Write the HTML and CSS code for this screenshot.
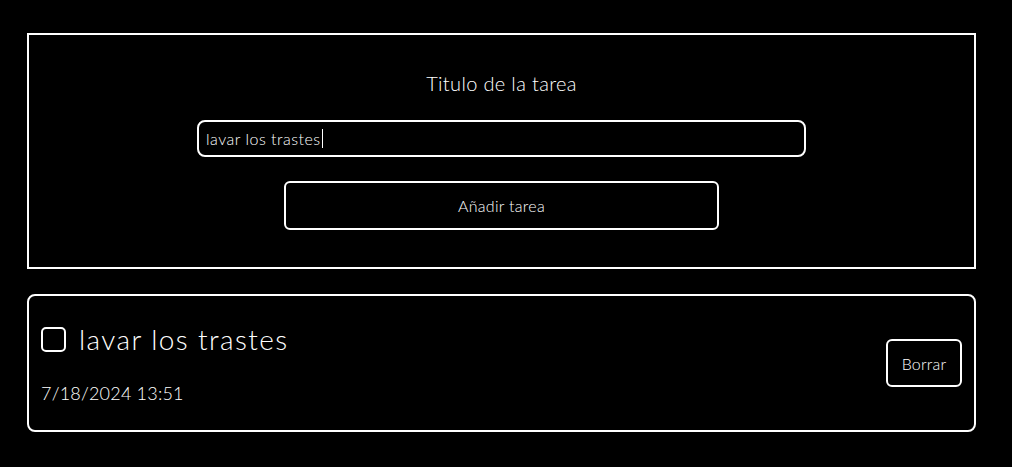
FILE: index.html
```html
<!DOCTYPE html>
<html lang="es">
<head>
<meta charset="utf-8">
<title>Tareas</title>
<link rel="stylesheet" href="styles.css">
</head>
<body>
<main class="page">
  <section class="form-box">
    <label class="form-label" for="title">Titulo de la tarea</label>
    <div class="input-field"><span class="input-text">lavar los trastes</span><span class="caret"></span></div>
    <button class="add-btn" type="button">Añadir tarea</button>
  </section>
  <section class="task">
    <div class="task-info">
      <div class="task-head">
        <span class="check"></span>
        <span class="task-title">lavar los trastes</span>
      </div>
      <div class="task-date">7/18/2024 13:51</div>
    </div>
    <button class="del-btn" type="button">Borrar</button>
  </section>
</main>
</body>
</html>
```
FILE: styles.css
```css
html, body {
  margin: 0;
  background: #000;
  color: #fff;
  font-family: "Lato", "Open Sans", sans-serif;
}
.page {
  padding: 33px 36px 0 27px;
  display: flex;
  flex-direction: column;
  gap: 25px;
}
.form-box {
  border: 2px solid #fff;
  height: 236px;
  box-sizing: border-box;
  display: flex;
  flex-direction: column;
  align-items: center;
  padding-top: 36px;
}
.form-label {
  font-size: 20px;
  font-weight: 300;
  line-height: 24px;
  letter-spacing: 0.35px;
}
.input-field {
  margin-top: 25px;
  width: 609px;
  height: 37px;
  box-sizing: border-box;
  border: 2px solid #fff;
  border-radius: 8px;
  display: flex;
  align-items: center;
  padding-left: 7px;
  font-size: 16px;
  font-weight: 300;
  letter-spacing: 0.5px;
}
.caret {
  display: inline-block;
  width: 1px;
  height: 19px;
  background: #fff;
  margin-left: 1px;
}
.add-btn {
  margin-top: 24px;
  width: 435px;
  height: 49px;
  background: #000;
  color: #fff;
  border: 2px solid #fff;
  border-radius: 6px;
  font-family: inherit;
  font-size: 16px;
  font-weight: 300;
  letter-spacing: 0.3px;
}
.task {
  border: 2px solid #fff;
  border-radius: 8px;
  height: 138px;
  box-sizing: border-box;
  display: flex;
  align-items: center;
  justify-content: space-between;
  padding: 0 12px 0 12px;
}
.task-info {
  display: flex;
  flex-direction: column;
  gap: 26px;
}
.task-head {
  display: flex;
  align-items: center;
  gap: 13px;
}
.check {
  width: 25px;
  height: 25px;
  box-sizing: border-box;
  border: 2px solid #fff;
  border-radius: 5px;
}
.task-title {
  font-size: 28px;
  font-weight: 300;
  line-height: 34px;
  letter-spacing: 1.4px;
}
.task-date {
  font-size: 18px;
  font-weight: 300;
  letter-spacing: 0.2px;
}
.del-btn {
  width: 76px;
  height: 48px;
  background: #000;
  color: #fff;
  border: 2px solid #fff;
  border-radius: 6px;
  font-family: inherit;
  font-size: 16px;
  font-weight: 300;
  letter-spacing: 0.2px;
}
```
